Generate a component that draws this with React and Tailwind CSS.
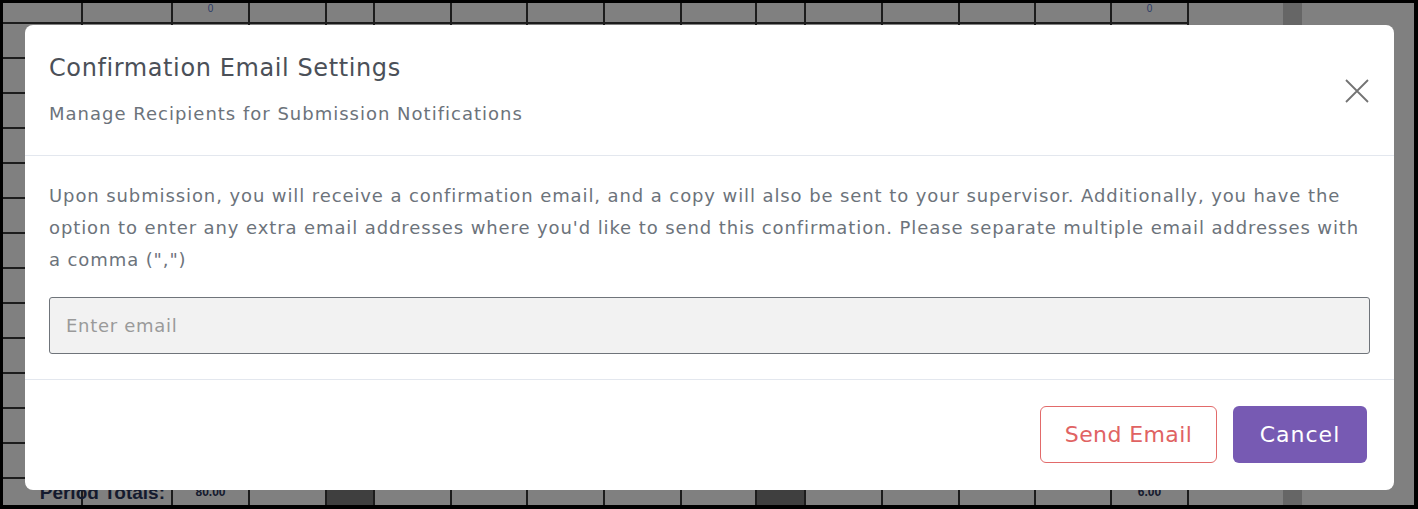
import { X } from 'lucide-react'

const cols = [80, 90, 77, 77, 48, 77, 76, 77, 77, 75, 49, 77, 77, 76, 76, 77]

function Row({ height, children, last }) {
    return (
        <div className="flex" style={{ height }}>
            {cols.map((w, i) => (
                <div
                    key={i}
                    style={{ width: w }}
                    className={`shrink-0 border-r-2 border-[#1c1c1c] ${last ? '' : 'border-b-2'} ${children ? children(i).cls : ''}`}
                >
                    {children ? children(i).content : null}
                </div>
            ))}
        </div>
    )
}

function Sheet() {
    return (
        <div className="flex h-full bg-[#808080] font-['Liberation_Sans',sans-serif]">
            <div className="flex flex-col">
                <Row height={21}>
                    {(i) => ({
                        cls: 'flex justify-center text-[10px] leading-[12px] text-[#2b3a66]',
                        content: i === 2 || i === 15 ? '0' : null,
                    })}
                </Row>
                {Array.from({ length: 13 }).map((_, r) => (
                    <Row key={r} height={35} />
                ))}
                <Row height={26} last>
                    {(i) => ({
                        cls:
                            (i === 4 || i === 10 ? 'bg-[#3f3f3f] ' : '') +
                            'flex items-center justify-center font-bold text-[12px] text-[#141a2e]',
                        content: i === 2 ? '80.00' : i === 15 ? '6.00' : null,
                    })}
                </Row>
            </div>
            <div className="w-[94px] shrink-0" />
            <div className="w-[19px] shrink-0 bg-[#666666]" />
            <div className="flex-1" />
        </div>
    )
}

export default function App() {
    return (
        <div className="relative w-[1418px] h-[509px] overflow-hidden bg-black pl-[3px] pt-[3px] pr-[4px] pb-[4px]">
            <Sheet />

            {/* label of the last row, spans the first two columns */}
            <div className="absolute left-[3px] top-[480px] w-[168px] h-[26px] flex items-center justify-end pr-[6px] font-['Liberation_Sans',sans-serif] font-bold text-[19px] text-[#141a2e]">
                Period Totals:
            </div>

            {/* Modal */}
            <div className="absolute left-[25px] top-[25px] w-[1369px] bg-white rounded-lg font-['DejaVu_Sans',sans-serif]">
                <div className="flex items-center justify-between px-6 pt-[27px] pb-[25px] border-b border-[#e3e7ee]">
                    <div className="flex flex-col gap-[14px]">
                        <h2 className="text-[24px] leading-[32px] tracking-[0.6px] text-[#4b5058]">
                            Confirmation Email Settings
                        </h2>
                        <p className="text-[18px] leading-[32px] tracking-[1px] text-[#6c737b]">
                            Manage Recipients for Submission Notifications
                        </p>
                    </div>
                    <button className="mr-[1px] text-[#737373]">
                        <svg width="24" height="24" viewBox="0 0 24 24" fill="none" stroke="currentColor" strokeWidth="1.8">
                            <path d="M1 1 L23 23 M23 1 L1 23" />
                        </svg>
                    </button>
                </div>

                <div className="px-6 pt-6 pb-[25px] border-b border-[#e3e7ee]">
                    <p className="text-[18px] leading-[32px] tracking-[0.9px] text-[#6c737b]">
                        Upon submission, you will receive a confirmation email, and a copy will also be sent to your supervisor. Additionally, you have the option to enter any extra email addresses where you'd like to send this confirmation. Please separate multiple email addresses with a comma (",")
                    </p>
                    <input
                        type="text"
                        placeholder="Enter email"
                        className="mt-[21px] w-full h-[57px] px-4 bg-[#f2f2f2] border-[1.5px] border-[#6f747a] rounded-[3px] text-[18px] tracking-[0.7px] text-[#555] placeholder:text-[#9a9a9a] outline-none"
                    />
                </div>

                <div className="flex justify-end gap-4 px-6 pt-[26px] pb-[27px] pr-[27px]">
                    <button className="w-[177px] h-[57px] rounded-md border-[1.5px] border-[#e26a6a] text-[#e06363] text-[22px] tracking-[0.4px]">
                        Send Email
                    </button>
                    <button className="w-[134px] h-[57px] rounded-md bg-[#775ab3] text-white text-[22px] tracking-[1px]">
                        Cancel
                    </button>
                </div>
            </div>
        </div>
    )
}
